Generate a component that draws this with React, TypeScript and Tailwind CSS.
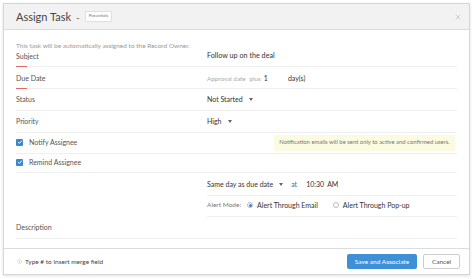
import { X, Info } from 'lucide-react';

function Caret() {
  return <span className="ml-[6px] inline-block border-x-[2.5px] border-t-[3px] border-x-transparent border-t-[#666]" />;
}

function Check() {
  return (
    <span className="flex h-[7px] w-[7px] items-center justify-center rounded-[1px] bg-[#3a87d6]">
      <svg viewBox="0 0 8 8" className="h-[6px] w-[6px]">
        <path d="M1.5 4.2 L3.2 5.8 L6.5 2.2" fill="none" stroke="#fff" strokeWidth="1.3" />
      </svg>
    </span>
  );
}

export default function App() {
  return (
    <div className="h-[279px] w-[474px] bg-white p-[3px] font-['Lato','Noto_Sans',sans-serif] text-[#444]">
      <div className="flex h-[272px] w-[467px] flex-col border border-[#d6d6d6] bg-white shadow-[0_1px_3px_rgba(0,0,0,0.12)]">
        {/* Header */}
        <div className="flex h-[26px] shrink-0 items-center border-b border-[#dcdcdc] bg-[#f2f2f3] pl-[12px] pr-[7px]">
          <span className="text-[11px] leading-none text-[#444]">Assign Task</span>
          <span className="ml-[5px] text-[10px] leading-none text-[#666]">-</span>
          <span className="ml-[5px] rounded-[1px] border border-[#e0e0e0] bg-white px-[3px] py-[2px] text-[4.5px] leading-none text-[#777]">Potentials</span>
          <X className="ml-auto h-[8px] w-[8px] text-[#aaa]" strokeWidth={1.5} />
        </div>

        {/* Body */}
        <div className="flex flex-1 flex-col px-[12px] pt-[13px] text-[7px]">
          <div className="text-[6.5px] leading-none text-[#999]">This task will be automatically assigned to the Record Owner.</div>

          <div className="flex h-[17px] items-end border-b border-[#efefef] pb-[4px]">
            <div className="relative w-[191px] text-[#555]">
              Subject
              <span className="absolute -bottom-[5px] left-0 h-[1px] w-[11px] bg-[#e06a6a]" />
            </div>
            <div className="text-[7.2px] text-[#333]">Follow up on the deal</div>
          </div>

          <div className="flex h-[22px] items-end border-b border-[#efefef] pb-[4px]">
            <div className="relative w-[191px] text-[#555]">
              Due Date
              <span className="absolute -bottom-[5px] left-0 h-[1px] w-[11px] bg-[#e06a6a]" />
            </div>
            <div className="flex items-end">
              <span className="text-[6.3px] text-[#aaa]">Approval date</span>
              <span className="ml-[4px] text-[6.3px] text-[#aaa]">plus</span>
              <span className="ml-[3px] text-[#333]">1</span>
              <span className="ml-[20px] text-[#333]">day(s)</span>
            </div>
          </div>

          <div className="flex h-[22px] items-end border-b border-[#efefef] pb-[5px]">
            <div className="w-[191px] text-[#555]">Status</div>
            <div className="flex items-center text-[#333]">Not Started<Caret /></div>
          </div>

          <div className="flex h-[22px] items-end border-b border-[#efefef] pb-[5px]">
            <div className="w-[191px] text-[#555]">Priority</div>
            <div className="flex items-center text-[#333]">High<Caret /></div>
          </div>

          <div className="relative flex h-[21px] items-end border-b border-[#efefef] pb-[5px]">
            <div className="flex w-[191px] items-center gap-[6px] text-[#555]"><Check />Notify Assignee</div>
            <div className="absolute top-[2px] right-[2px] flex h-[16px] w-[181px] items-center justify-center bg-[#fbfbe2] text-[5.9px] text-[#777]">
              Notification emails will be sent only to active and confirmed users.
            </div>
          </div>

          <div className="flex h-[19px] items-end border-b border-[#efefef] pb-[4px]">
            <div className="flex w-[191px] items-center gap-[6px] text-[#555]"><Check />Remind Assignee</div>
          </div>

          <div className="flex h-[23px] items-end">
            <div className="w-[191px]" />
            <div className="flex flex-1 items-center border-b border-[#efefef] pb-[5px] text-[#333]">
              Same day as due date<Caret />
              <span className="ml-[8px] text-[#666]">at</span>
              <span className="ml-[9px]">10:30</span>
              <span className="ml-[3px]">AM</span>
            </div>
          </div>

          <div className="flex h-[21px] items-end">
            <div className="w-[191px]" />
            <div className="flex flex-1 items-center border-b border-[#efefef] pb-[5px] text-[#333]">
              <span className="text-[6.5px] text-[#777]">Alert Mode:</span>
              <span className="ml-[6px] flex h-[6px] w-[6px] items-center justify-center rounded-full border border-[#bbb]">
                <span className="h-[3px] w-[3px] rounded-full bg-[#3a87d6]" />
              </span>
              <span className="ml-[4px]">Alert Through Email</span>
              <span className="ml-[15px] h-[6px] w-[6px] rounded-full border border-[#bbb]" />
              <span className="ml-[4px]">Alert Through Pop-up</span>
            </div>
          </div>

          <div className="flex h-[22px] items-end border-b border-[#efefef] pb-[5px]">
            <div className="w-[191px] text-[#555]">Description</div>
          </div>
        </div>

        {/* Footer */}
        <div className="flex h-[26px] shrink-0 items-center border-t border-[#dcdcdc] pl-[13px] pr-[9px]">
          <Info className="h-[5px] w-[5px] text-[#bbb]" strokeWidth={2} />
          <span className="ml-[3px] text-[6.5px] text-[#444]">Type # to insert merge field</span>
          <button className="ml-auto h-[15px] w-[70px] rounded-[2px] bg-[#3d8fd8] text-[6.5px] text-white">Save and Associate</button>
          <button className="ml-[6px] h-[15px] w-[37px] rounded-[2px] border border-[#ccc] bg-white text-[6.5px] text-[#555]">Cancel</button>
        </div>
      </div>
    </div>
  );
}
